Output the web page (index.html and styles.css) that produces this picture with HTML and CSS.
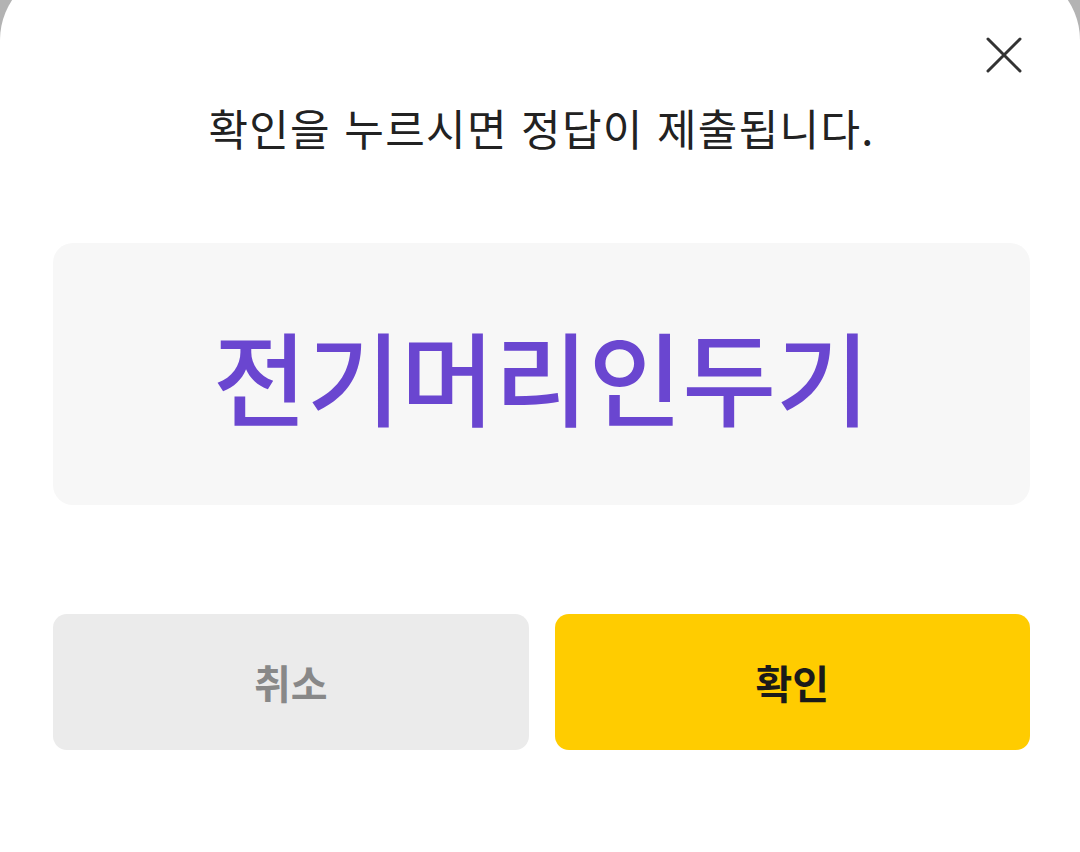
FILE: index.html
```html
<!DOCTYPE html>
<html lang="ko">
<head>
<meta charset="utf-8">
<link rel="stylesheet" href="styles.css">
</head>
<body>
<div class="sheet">
  <button class="close" aria-label="닫기">
    <svg width="36" height="36" viewBox="0 0 36 36"><path d="M2 2 L34 34 M34 2 L2 34" stroke="#333" stroke-width="3" stroke-linecap="round" fill="none"/></svg>
  </button>
  <p class="title">확인을 누르시면 정답이 제출됩니다.</p>
  <div class="answer">전기머리인두기</div>
  <div class="actions">
    <button class="btn cancel">취소</button>
    <button class="btn ok">확인</button>
  </div>
</div>
</body>
</html>
```
FILE: styles.css
```css
html, body {
  margin: 0;
  padding: 0;
  height: 100%;
  background: #b3b3b3;
  overflow: hidden;
}
.sheet {
  position: relative;
  margin-top: -32px;
  height: calc(100% + 32px);
  background: #fff;
  border-radius: 72px 72px 0 0;
  padding: 32px 50px 0 53px;
  box-sizing: border-box;
  font-family: "Noto Sans CJK KR", "Noto Sans", sans-serif;
}
.close {
  position: absolute;
  top: 69px;
  right: 58px;
  width: 36px;
  height: 36px;
  padding: 0;
  border: 0;
  background: none;
}
.close svg { display: block; }
.title {
  margin: 0;
  padding-top: 97px;
  text-align: center;
  font-size: 43px;
  line-height: 60px;
  color: #222;
  font-weight: 400;
  letter-spacing: 1.3px;
}
.answer {
  margin-top: 86px;
  height: 262px;
  border-radius: 20px;
  background: #f7f7f7;
  display: flex;
  align-items: center;
  justify-content: center;
  color: #6a46d0;
  font-size: 102px;
  font-weight: 500;
  letter-spacing: 0;
}
.actions {
  margin-top: 109px;
  display: grid;
  grid-template-columns: 1fr 1fr;
  gap: 26px;
}
.btn {
  height: 136px;
  border: 0;
  border-radius: 14px;
  font-family: "Noto Sans CJK KR", "Noto Sans", sans-serif;
  font-size: 40px;
  font-weight: 700;
}
.cancel { background: #ebebeb; color: #888; }
.ok { background: #ffcc00; color: #1a1a1a; }
```
